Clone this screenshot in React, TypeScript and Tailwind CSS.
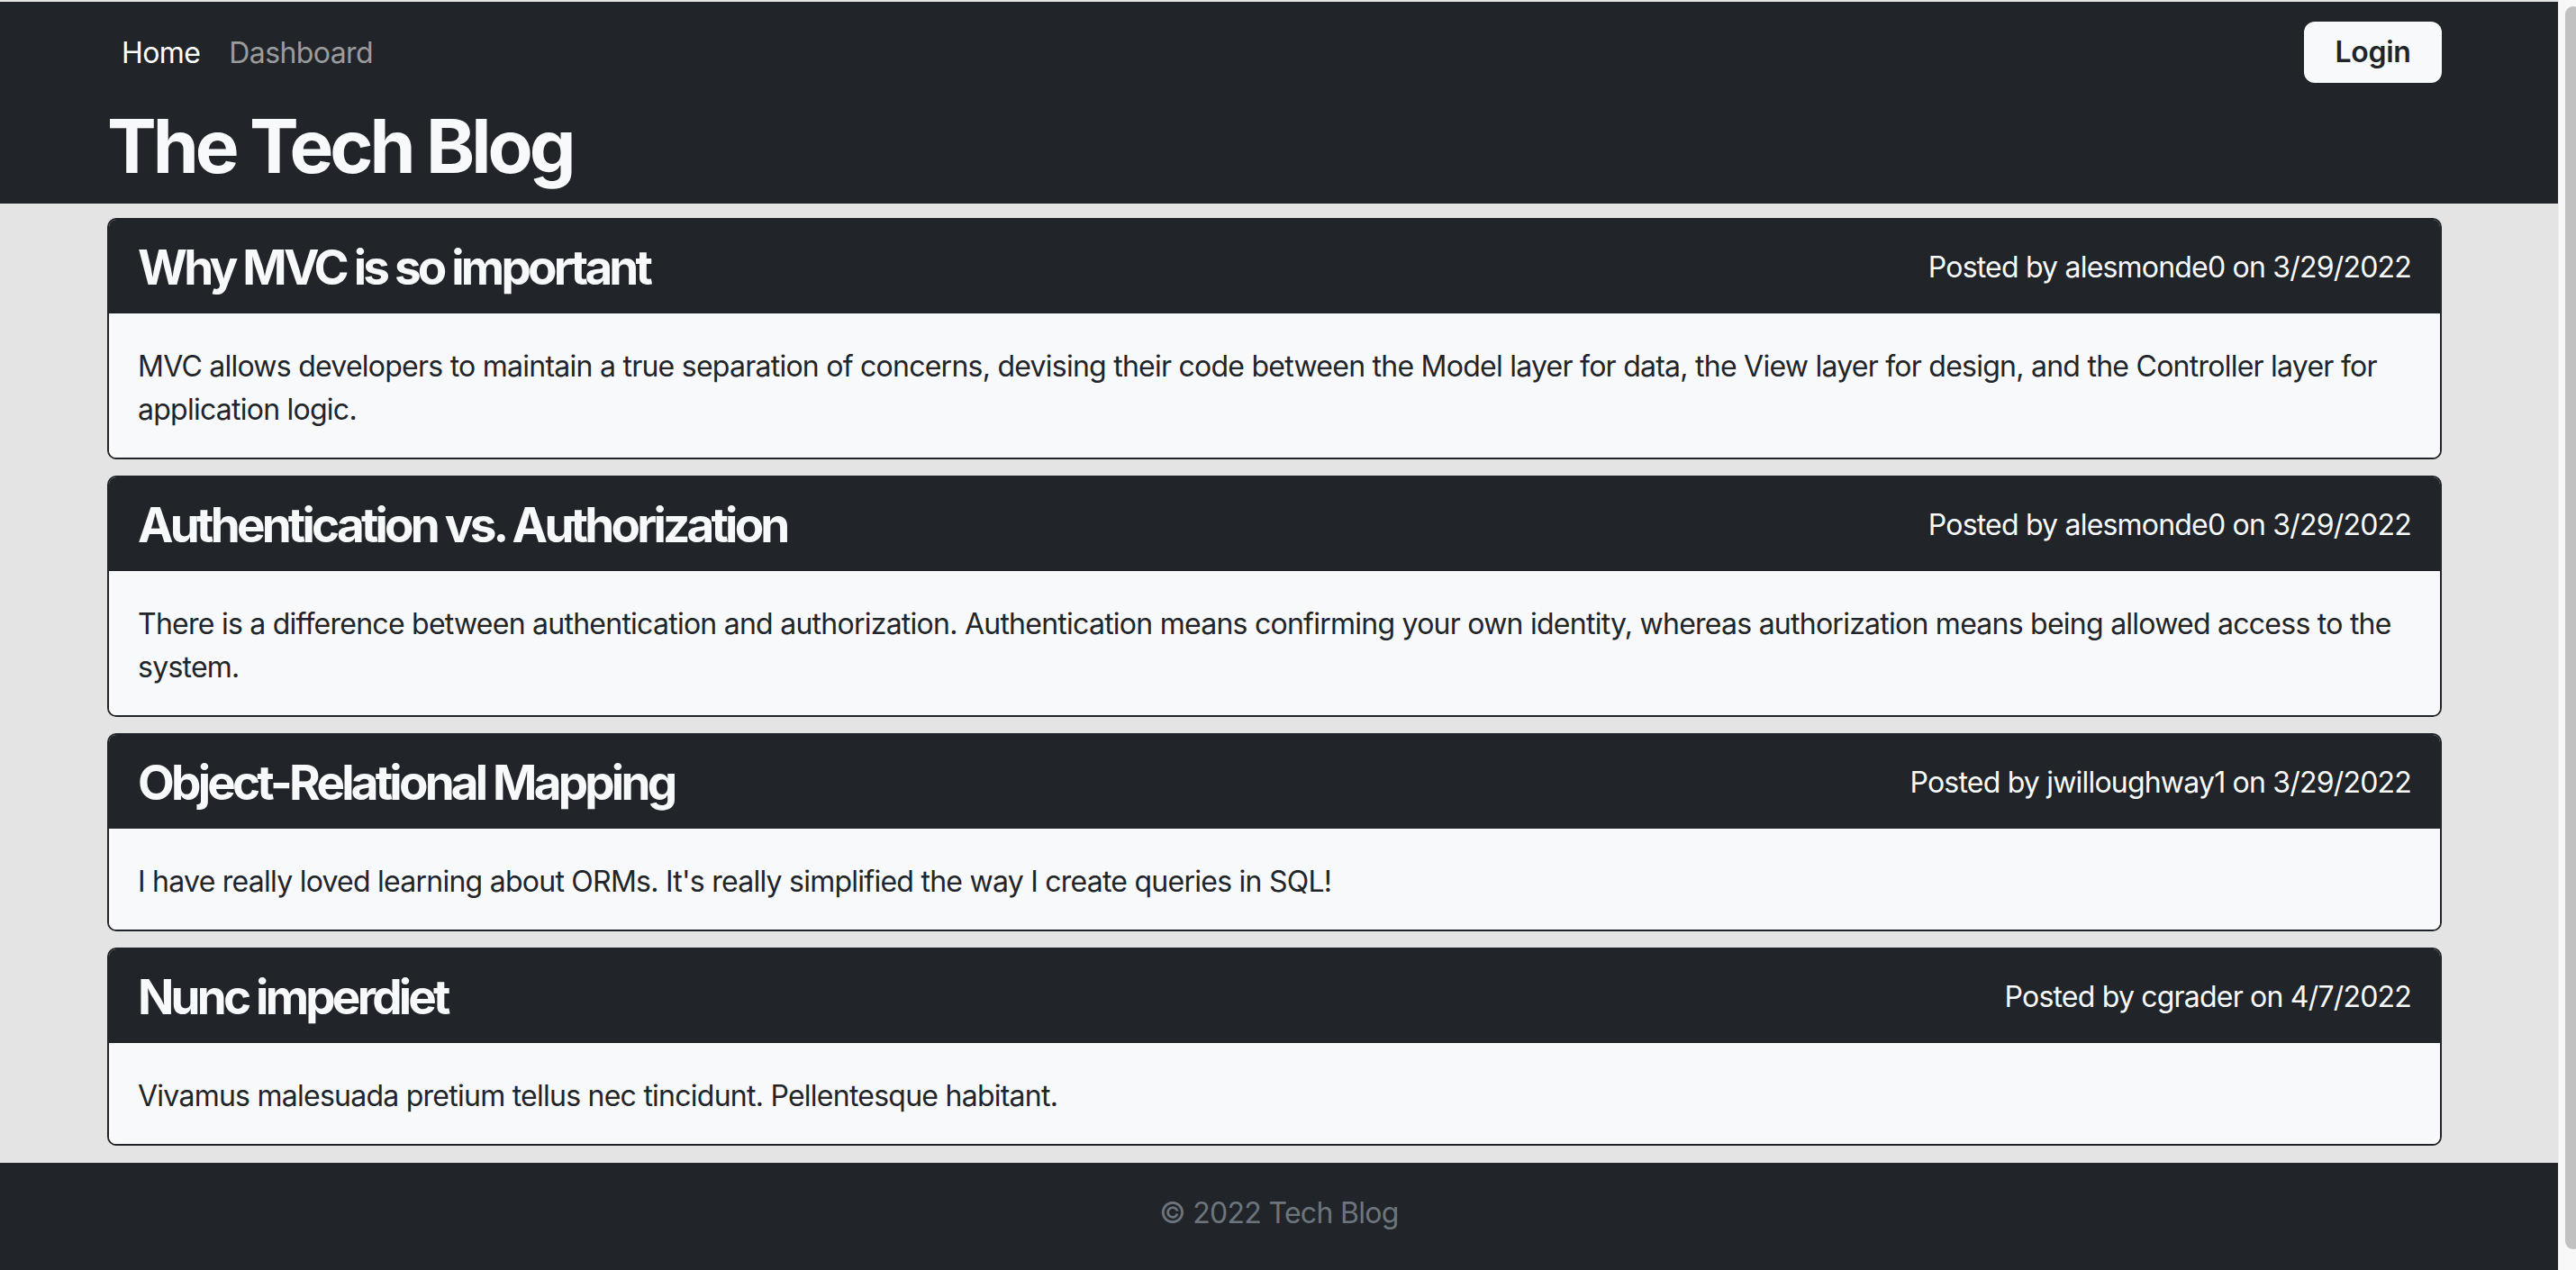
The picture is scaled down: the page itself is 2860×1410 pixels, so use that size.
import React from "react";

type Post = {
  title: string;
  author: string;
  date: string;
  body: string;
};

const posts: Post[] = [
  {
    title: "Why MVC is so important",
    author: "alesmonde0",
    date: "3/29/2022",
    body: "MVC allows developers to maintain a true separation of concerns, devising their code between the Model layer for data, the View layer for design, and the Controller layer for application logic.",
  },
  {
    title: "Authentication vs. Authorization",
    author: "alesmonde0",
    date: "3/29/2022",
    body: "There is a difference between authentication and authorization. Authentication means confirming your own identity, whereas authorization means being allowed access to the system.",
  },
  {
    title: "Object-Relational Mapping",
    author: "jwilloughway1",
    date: "3/29/2022",
    body: "I have really loved learning about ORMs. It's really simplified the way I create queries in SQL!",
  },
  {
    title: "Nunc imperdiet",
    author: "cgrader",
    date: "4/7/2022",
    body: "Vivamus malesuada pretium tellus nec tincidunt. Pellentesque habitant.",
  },
];

function PostCard({ post }: { post: Post }) {
  return (
    <article className="border-2 border-[#212529] rounded-[10px] overflow-hidden">
      <div className="h-[104px] px-[32px] flex items-center justify-between bg-[#212529] text-[#f8f9fa]">
        <h3 className="text-[53px] leading-none font-bold tracking-[-3.8px] pt-[2px]">{post.title}</h3>
        <span className="text-[32px] leading-[48px] tracking-[-0.8px] pt-[2px]">
          Posted by {post.author} on {post.date}
        </span>
      </div>
      <div className="px-[32px] pt-[35px] pb-[29px] bg-[#f8f9fa] text-[#212529] text-[32px] leading-[48px] tracking-[-0.75px]">
        {post.body}
      </div>
    </article>
  );
}

export default function App() {
  return (
    <div className="flex h-[1410px] overflow-hidden bg-[#e4e4e4] font-['Inter','Liberation_Sans',sans-serif]">
      <div className="flex-1 flex flex-col pt-[2px]">
        <header className="bg-[#212529] pt-[22px] pb-[22px]">
          <div className="ml-[119px] w-[2592px]">
            <nav className="h-[68px] flex items-center justify-between">
              <div className="flex items-center text-[32px] leading-[48px] tracking-[-0.6px] pt-[2px]">
                <a className="px-[16px] text-white">Home</a>
                <a className="px-[16px] text-[#9a9b9d]">Dashboard</a>
              </div>
              <button className="w-[153px] h-[68px] rounded-[12px] bg-[#f8f9fa] text-[#212529] text-[32px] font-semibold tracking-[-0.3px]">
                Login
              </button>
            </nav>
            <h1 className="mt-[30px] text-[82px] leading-none font-bold text-[#f8f9fa] tracking-[-4px]">
              The Tech Blog
            </h1>
          </div>
        </header>

        <main className="ml-[119px] w-[2592px] pt-[16px] pb-[19px] flex flex-col gap-[18px]">
          {posts.map((p) => (
            <PostCard key={p.title} post={p} />
          ))}
        </main>

        <footer className="flex-1 bg-[#212529] pt-[32px] text-center text-[32px] leading-[48px] tracking-[-0.7px] text-[#6c757d]">
          © 2022 Tech Blog
        </footer>
      </div>

      {/* fake scrollbar */}
      <div className="w-[20px] bg-[#f8f8f8] border-l border-[#ececec] overflow-hidden pt-[7px]">
        <div className="ml-[7px] w-[18px] h-[1380px] rounded-full bg-[#c1c1c1]" />
      </div>
    </div>
  );
}
